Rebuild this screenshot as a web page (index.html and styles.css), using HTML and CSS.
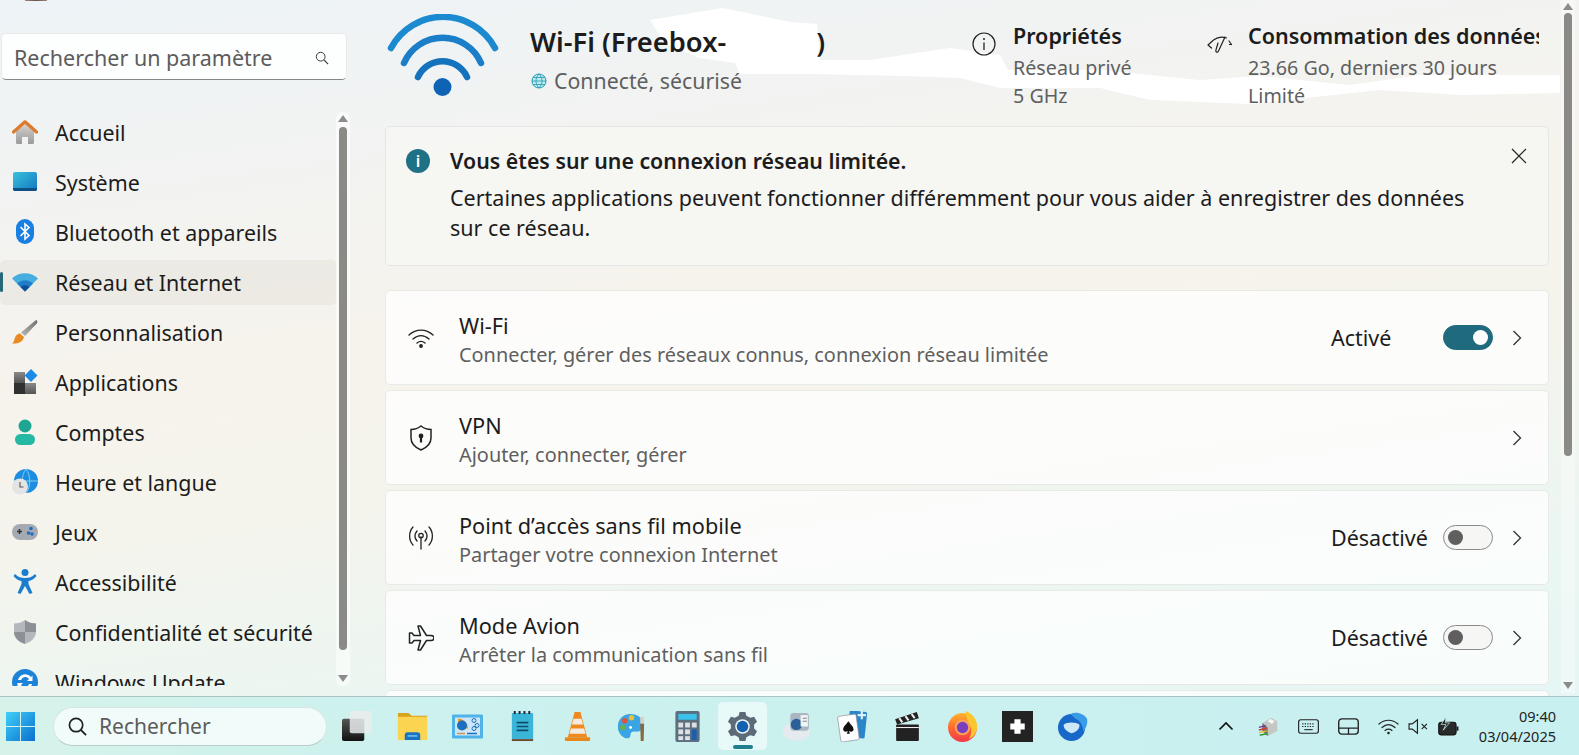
FILE: index.html
```html
<!DOCTYPE html>
<html lang="fr">
<head>
<meta charset="utf-8">
<title>Paramètres</title>
<link rel="stylesheet" href="styles.css">
</head>
<body>
<div class="app">
  <aside class="sidebar">
    <div class="avatar-sliver"></div>
    <div class="search-box">
      <span class="search-text">Rechercher un paramètre</span>
      <svg class="search-glass" viewBox="0 0 16 16"><circle cx="6.500" cy="6.500" r="5" fill="none" stroke="#333" stroke-width="1.100"/><path d="M10.200 10.200 15 15" stroke="#333" stroke-width="1.300"/></svg>
    </div>
    <nav class="nav">
      <a class="nav-item"><svg class="nav-icon" viewBox="0 0 26 24"><defs><linearGradient id="gh" x1="0" y1="0" x2="0" y2="1"><stop offset="0" stop-color="#d8d4d0"/><stop offset="1" stop-color="#9a9a9c"/></linearGradient></defs><path d="M4 11 13 3l9 8v11.500a1.500 1.500 0 0 1-1.500 1.500H16v-7h-6v7H5.500A1.500 1.500 0 0 1 4 22.500z" fill="url(#gh)"/><path d="M1.500 12 13 1.800 24.500 12" fill="none" stroke="#dd7a2c" stroke-width="3.200" stroke-linecap="round" stroke-linejoin="round"/></svg><span>Accueil</span></a>
      <a class="nav-item"><svg class="nav-icon" viewBox="0 0 26 24"><defs><linearGradient id="gs" x1="0" y1="0" x2="1" y2="1"><stop offset="0" stop-color="#39c0dc"/><stop offset="1" stop-color="#1477bf"/></linearGradient></defs><rect x="1" y="2" width="24" height="19" rx="2" fill="url(#gs)"/><path d="M1 18h24v1a2 2 0 0 1-2 2H3a2 2 0 0 1-2-2z" fill="#0d4f86"/></svg><span>Système</span></a>
      <a class="nav-item"><svg class="nav-icon" viewBox="0 0 26 26"><rect x="4" y="0" width="18" height="25" rx="9" fill="#1a7fe3"/><path d="M8.500 8 17 16.500 13 20V5l4 3.500L8.500 17" fill="none" stroke="#fff" stroke-width="1.600"/></svg><span>Bluetooth et appareils</span></a>
      <a class="nav-item active"><svg class="nav-icon" viewBox="0 0 26 20"><path d="M0 6.500C7-.5 19-.5 26 6.500L13 19.500z" fill="#43b3e8"/><path d="M5 11.500c5-4.500 11-4.500 16 0l-8 8z" fill="#1b80d2"/><path d="M8.500 15c3-2.500 6-2.500 9 0L13 19.500z" fill="#0b4f9e"/></svg><span>Réseau et Internet</span></a>
      <a class="nav-item"><svg class="nav-icon" viewBox="0 0 26 24"><defs><linearGradient id="gb" x1="1" y1="0" x2="0" y2="1"><stop offset="0" stop-color="#6f6f6f"/><stop offset="1" stop-color="#b8b8b8"/></linearGradient></defs><path d="M24 0c1.500.5 1.800 2 1 3.200L13 16l-4-3.500z" fill="url(#gb)"/><path d="M8 13.500 12 17c-1 5-6 7-12 6.500 2.500-1.500 2-4.500 3.500-7C4.800 14.300 6.500 13.300 8 13.500z" fill="#ea8a25"/></svg><span>Personnalisation</span></a>
      <a class="nav-item"><svg class="nav-icon" viewBox="0 0 26 26"><defs><linearGradient id="ga" x1="0" y1="0" x2="0" y2="1"><stop offset="0" stop-color="#8a8a8a"/><stop offset="1" stop-color="#555"/></linearGradient></defs><rect x="2" y="3" width="11" height="11" fill="url(#ga)"/><rect x="2" y="14" width="11" height="11" fill="#303030"/><rect x="13" y="14" width="11" height="11" fill="url(#ga)"/><path d="m19 0 6.500 6.500L19 13l-6.500-6.500z" fill="#1c8be6"/></svg><span>Applications</span></a>
      <a class="nav-item"><svg class="nav-icon" viewBox="0 0 26 26"><circle cx="13" cy="7" r="6.500" fill="#1fa692"/><rect x="3" y="15" width="20" height="11" rx="5.500" fill="#25b8a2"/></svg><span>Comptes</span></a>
      <a class="nav-item"><svg class="nav-icon" viewBox="0 0 26 26"><circle cx="14" cy="12" r="12" fill="#1c8de0"/><path d="M2 12h24M14 0c-5 6-5 18 0 24M14 0c5 6 5 18 0 24" stroke="#7fd0f0" stroke-width="1" fill="none"/><circle cx="8" cy="17.500" r="8" fill="#e4e4e4"/><path d="M8 13v5h3.500" stroke="#555" stroke-width="1.100" fill="none"/></svg><span>Heure et langue</span></a>
      <a class="nav-item"><svg class="nav-icon" viewBox="0 0 26 18"><rect x="0" y="1" width="26" height="16" rx="8" fill="#a6abb3"/><path d="M5 8.500h5M7.500 6v5" stroke="#333" stroke-width="1.500"/><circle cx="19" cy="5.500" r="1.800" fill="#1b6fc2"/><circle cx="16.500" cy="10" r="1.800" fill="#1b6fc2"/><circle cx="20" cy="11" r="1.800" fill="#1b6fc2"/></svg><span>Jeux</span></a>
      <a class="nav-item"><svg class="nav-icon" viewBox="0 0 26 26"><circle cx="13" cy="3.500" r="3.500" fill="#1b7dcf"/><path d="M3 5c3 3 6 4 10 4s7-1 10-4l1.500 2c-2.500 3-5 4.500-8 5v3l4 9-3 1-4.500-8-4.500 8-3-1 4-9v-3c-3-.5-5.500-2-8-5z" fill="#1b7dcf"/></svg><span>Accessibilité</span></a>
      <a class="nav-item"><svg class="nav-icon" viewBox="0 0 26 24"><path d="M13 0c3 2.500 7 3.500 11 3.500V12c0 5-4.500 10-11 12C6.500 22 2 17 2 12V3.500C6 3.500 10 2.500 13 0z" fill="#b4b8bc"/><path d="M13 0c3 2.500 7 3.500 11 3.500V12H13zM13 12H2c0 5 4.500 10 11 12z" fill="#8b9197"/></svg><span>Confidentialité et sécurité</span></a>
      <a class="nav-item"><svg class="nav-icon" viewBox="0 0 26 26"><circle cx="13" cy="13" r="13" fill="#1c83d8"/><path d="M6 11a7.500 7.500 0 0 1 13-3l1.500-1.500V12H15l2-2a4.500 4.500 0 0 0-8 1zM20 15a7.500 7.500 0 0 1-13 3l-1.500 1.500V14H11l-2 2a4.500 4.500 0 0 0 8-1z" fill="#fff"/></svg><span>Windows Update</span></a>
    </nav>
    <div class="scroll side-scroll"><i class="arrow up"></i><b class="thumb"></b><i class="arrow down"></i></div>
  </aside>

  <main class="main">
    <svg class="scribble" viewBox="0 0 1199 110"><path d="M270 20 343 8l67 14 27 2 3 36h50l80-12 50 7 8 15h92l100 10 60-4 90 9 70-10h140v18l-100 2-80-5-130 14-100-4-50-12H620l-40-10-55-2-90-2h-75l-5-11-35-5-35-14z" fill="#fff"/></svg>

    <header class="hero">
      <svg class="hero-icon" viewBox="0 0 116 84"><path d="M6 34A59 59 0 0 1 110 34" fill="none" stroke="#1c8ad0" stroke-width="6.500" stroke-linecap="round"/><path d="M19 49A42 42 0 0 1 96 49" fill="none" stroke="#1a7fc8" stroke-width="6.500" stroke-linecap="round"/><path d="M33 63A27 27 0 0 1 82 63" fill="none" stroke="#1573bd" stroke-width="6.500" stroke-linecap="round"/><circle cx="57.500" cy="73" r="9" fill="#0f63b5"/></svg>
      <div class="hero-info">
        <div class="hero-title">Wi-Fi (Freebox-<span class="redacted"></span>)</div>
        <div class="hero-status"><svg class="globe" viewBox="0 0 16 16"><circle cx="8" cy="8" r="7" fill="#bfe9f0" stroke="#1f9ab0" stroke-width="1"/><path d="M1 8h14M8 1c-4 4-4 10 0 14M8 1c4 4 4 10 0 14M2 4.500h12M2 11.500h12" fill="none" stroke="#1f9ab0" stroke-width=".8"/></svg>Connecté, sécurisé</div>
      </div>
      <div class="prop prop-a">
        <svg class="prop-icon" viewBox="0 0 24 24"><circle cx="12" cy="12" r="11" fill="none" stroke="#222" stroke-width="1.200"/><path d="M12 10.500V18" stroke="#222" stroke-width="1.300"/><circle cx="12" cy="7" r="1" fill="#222"/></svg>
        <div>
          <div class="prop-title">Propriétés</div>
          <div class="prop-line">Réseau privé</div>
          <div class="prop-line">5 GHz</div>
        </div>
      </div>
      <div class="prop prop-b">
        <svg class="prop-icon data" viewBox="0 0 26 20"><path d="M1 11 6 6.500M1 11l3.500 3M6.500 6c4-3 9-3.500 13-2M22 7l2.500 3.500M22.500 10.500l2-.2M18 3 11.500 17c-1 2-3.200 1.200-2.600-.8L11 9" fill="none" stroke="#222" stroke-width="1.200" stroke-linecap="round"/></svg>
        <div class="prop-body">
          <div class="prop-title">Consommation des données</div>
          <div class="prop-line">23.66 Go, derniers 30 jours</div>
          <div class="prop-line">Limité</div>
        </div>
      </div>
    </header>

    <section class="banner">
      <span class="banner-icon">i</span>
      <div class="banner-text">
        <div class="banner-title">Vous êtes sur une connexion réseau limitée.</div>
        <div class="banner-body">Certaines applications peuvent fonctionner différemment pour vous aider à enregistrer des données sur ce réseau.</div>
      </div>
      <svg class="banner-close" viewBox="0 0 16 16"><path d="M1 1l14 14M15 1 1 15" stroke="#222" stroke-width="1.200"/></svg>
    </section>

    <section class="cards">
      <div class="card">
        <svg class="card-icon" viewBox="0 0 26 20"><path d="M1 7c7-6.500 17-6.500 24 0M5 11c5-4.500 11-4.500 16 0M9 15c2.500-2 5.500-2 8 0" fill="none" stroke="#222" stroke-width="1.400" stroke-linecap="round"/><circle cx="13" cy="18" r="1.900" fill="#222"/></svg>
        <div class="card-text"><div class="card-title">Wi-Fi</div><div class="card-sub">Connecter, gérer des réseaux connus, connexion réseau limitée</div></div>
        <span class="card-state">Activé</span><span class="toggle on"><i></i></span>
        <svg class="chevron" viewBox="0 0 10 16"><path d="m1.500 1 7 7-7 7" fill="none" stroke="#333" stroke-width="1.300"/></svg>
      </div>
      <div class="card">
        <svg class="card-icon" viewBox="0 0 26 26"><path d="M13 1c3 2.500 6.500 3.500 10 3.500V13c0 5.500-4 9.500-10 12C7 22.500 3 18.500 3 13V4.500C6.500 4.500 10 3.500 13 1z" fill="none" stroke="#222" stroke-width="1.500"/><circle cx="13" cy="11" r="2.400" fill="#222"/><rect x="11.900" y="11" width="2.200" height="6.500" fill="#222"/></svg>
        <div class="card-text"><div class="card-title">VPN</div><div class="card-sub">Ajouter, connecter, gérer</div></div>
        <svg class="chevron" viewBox="0 0 10 16"><path d="m1.500 1 7 7-7 7" fill="none" stroke="#333" stroke-width="1.300"/></svg>
      </div>
      <div class="card">
        <svg class="card-icon" viewBox="0 0 26 24"><path d="M5 1C.5 6 .5 14 5 19M21 1c4.500 5 4.500 13 0 18M9 5c-2.500 3-2.500 7 0 10M17 5c2.500 3 2.500 7 0 10M13 11v12" fill="none" stroke="#222" stroke-width="1.300" stroke-linecap="round"/><circle cx="13" cy="9.500" r="2.200" fill="none" stroke="#222" stroke-width="1.300"/></svg>
        <div class="card-text"><div class="card-title">Point d’accès sans fil mobile</div><div class="card-sub">Partager votre connexion Internet</div></div>
        <span class="card-state">Désactivé</span><span class="toggle"><i></i></span>
        <svg class="chevron" viewBox="0 0 10 16"><path d="m1.500 1 7 7-7 7" fill="none" stroke="#333" stroke-width="1.300"/></svg>
      </div>
      <div class="card">
        <svg class="card-icon" viewBox="0 0 26 26"><path d="M10 1h2.500l6 9.500H23c2 0 3 1.200 3 2.500s-1 2.500-3 2.500h-4.500l-6 9.500H10l2.500-9.500H6l-2 2.500H1.500V8H4l2 2.500h6.500z" fill="none" stroke="#222" stroke-width="1.500" stroke-linejoin="round"/></svg>
        <div class="card-text"><div class="card-title">Mode Avion</div><div class="card-sub">Arrêter la communication sans fil</div></div>
        <span class="card-state">Désactivé</span><span class="toggle"><i></i></span>
        <svg class="chevron" viewBox="0 0 10 16"><path d="m1.500 1 7 7-7 7" fill="none" stroke="#333" stroke-width="1.300"/></svg>
      </div>
      <div class="card"></div>
    </section>
    <div class="scroll main-scroll"><i class="arrow up"></i><b class="thumb"></b><i class="arrow down"></i></div>
  </main>
</div>

<footer class="taskbar">
  <svg class="start" viewBox="0 0 29 29"><defs><linearGradient id="gw" x1="0" y1="0" x2="1" y2="1"><stop offset="0" stop-color="#3fd0f8"/><stop offset="1" stop-color="#0a6fd0"/></linearGradient></defs><path d="M0 0h14v14H0zM15 0h14v14H15zM0 15h14v14H0zM15 15h14v14H15z" fill="url(#gw)"/></svg>
  <div class="pill">
    <svg class="pill-glass" viewBox="0 0 20 20"><circle cx="8.500" cy="8.500" r="7" fill="none" stroke="#222" stroke-width="1.800"/><path d="m13.500 13.500 5.500 5.500" stroke="#222" stroke-width="2"/></svg>
    <span>Rechercher</span>
  </div>
  <div class="apps">
    <span class="app-slot"><svg viewBox="0 0 32 32"><defs><linearGradient id="gt" x1="0" y1="0" x2="0" y2="1"><stop offset="0" stop-color="#555"/><stop offset="1" stop-color="#111"/></linearGradient></defs><rect x="0" y="8" width="23" height="23" rx="2" fill="url(#gt)"/><rect x="8" y="0" width="23" height="23" rx="2" fill="#e9ecec" opacity=".85"/></svg></span>
    <span class="app-slot"><svg viewBox="0 0 32 30"><path d="M1 1h11l3 3h16v25H1z" fill="#d9a21e"/><rect x="1" y="5" width="30" height="24" fill="#fbd552"/><path d="M8 29v-5a3 3 0 0 1 3-3h10a3 3 0 0 1 3 3v5z" fill="#1873c2"/><rect x="11" y="24" width="10" height="1.500" fill="#7cc6f0"/></svg></span>
    <span class="app-slot"><svg viewBox="0 0 31 26"><rect x="0" y="1" width="31" height="24" rx="1" fill="#4fb3ea"/><rect x="3" y="4" width="25" height="18" fill="#cde7f7"/><path d="M6 5v10h10A10 10 0 0 0 6 5z" fill="#e59a1f"/><circle cx="10" cy="12" r="5" fill="#1b6fc0"/><circle cx="22" cy="7" r="2" fill="none" stroke="#1b6fc0"/><circle cx="25" cy="12" r="2" fill="none" stroke="#1b6fc0"/><circle cx="22" cy="15" r="2" fill="none" stroke="#1b6fc0"/><path d="M5 20h8" stroke="#c99a4e" stroke-width="1.500"/><path d="M15 20h10" stroke="#1b6fc0" stroke-width="1.500"/></svg></span>
    <span class="app-slot"><svg viewBox="0 0 24 32"><rect x="1" y="2" width="22" height="27" rx="1" fill="#3ab5d8"/><rect x="1" y="29" width="22" height="2" fill="#6d4a2e"/><path d="M6 12h12M6 16h12M6 20h12" stroke="#0f4f6c" stroke-width="1.600"/><path d="M4 0v3M9 0v3M14 0v3M19 0v3" stroke="#223" stroke-width="2"/></svg></span>
    <span class="app-slot"><svg viewBox="0 0 26 32"><path d="M10 1h6l7 26H3z" fill="#f08a1e"/><path d="M8.800 8h8.400l1.500 6H7.300zM6.200 18h13.600l1.500 5.500H4.700z" fill="#f1ebe4"/><rect x="0" y="27" width="26" height="4" rx="1" fill="#e8871c"/></svg></span>
    <span class="app-slot"><svg viewBox="0 0 32 32"><path d="M14 3C6 3 0 9 1 18c1 7 7 11 11 10 3-1 1-4 3-6 2-1.500 5 0 8-1 3-2 6-5 4-10C25 6 20 3 14 3z" fill="#39a5e4"/><circle cx="8" cy="10" r="2.800" fill="#e0533a"/><circle cx="15" cy="7" r="2.800" fill="#e8c23a"/><circle cx="6" cy="17" r="2.800" fill="#6cae47"/><circle cx="14" cy="17" r="1.500" fill="#fff"/><path d="M24 13h4l-.5 18h-3z" fill="#8a6a3d"/><rect x="24" y="6" width="4" height="7" fill="#d8d2c4"/></svg></span>
    <span class="app-slot"><svg viewBox="0 0 25 32"><rect x="0" y="0" width="25" height="32" rx="2" fill="#5d6f7e"/><rect x="3" y="3" width="19" height="6" fill="#3ac2ea"/><g fill="#dde1e5"><rect x="3" y="12" width="5" height="5"/><rect x="10" y="12" width="5" height="5"/><rect x="3" y="19" width="5" height="5"/><rect x="10" y="19" width="5" height="5"/><rect x="3" y="26" width="5" height="4"/><rect x="10" y="26" width="5" height="4"/></g><rect x="17" y="19" width="5" height="11" fill="#1c5fae"/><rect x="17" y="12" width="5" height="5" fill="#dde1e5"/></svg></span>
    <span class="app-slot current"><svg viewBox="0 0 32 32"><path d="M13 1h6l1 4 4 2 4-1 3 5-3 3v4l3 3-3 5-4-1-4 2-1 4h-6l-1-4-4-2-4 1-3-5 3-3v-4L1 11l3-5 4 1 4-2z" fill="#5c6b77"/><circle cx="16" cy="16" r="7.500" fill="#eef6f6"/><circle cx="16" cy="16" r="6" fill="#1660b0"/></svg><i class="run-mark"></i></span>
    <span class="app-slot"><svg viewBox="0 0 30 30"><ellipse cx="14" cy="20" rx="13" ry="9" fill="#e4eaee"/><rect x="8" y="2" width="18" height="17" rx="3" fill="#aab6c0"/><circle cx="14" cy="13" r="5.500" fill="#2a5f9a"/><path d="M18 4h7v11h-7z" fill="#f2f5f6"/><path d="M20 7h4M20 10h4" stroke="#7a8790"/></svg></span>
    <span class="app-slot"><svg viewBox="0 0 30 30"><rect x="11" y="0" width="17" height="26" rx="1.500" fill="#2a86c8" transform="rotate(6 19 13)"/><rect x="2" y="4" width="18" height="25" rx="1.500" fill="#fff" stroke="#889" stroke-width=".6" transform="rotate(-8 11 16)"/><path d="M11 10c2 3 5 5 5 8 0 2-3 3-4.500 1l1 3h-3l1-3C9 21 6 20 6 18c0-3 3-5 5-8z" fill="#111"/><path d="M24 0v8M20 4h8" stroke="#dff2fb" stroke-width="2"/></svg></span>
    <span class="app-slot"><svg viewBox="0 0 26 30"><rect x="2" y="13" width="22" height="16" rx="1" fill="#222"/><path d="M1 8 22 1l2 6L3 13z" fill="#222"/><path d="M5 7l3 4M11 5l3 4M17 3l3 4" stroke="#eee" stroke-width="2"/><path d="M2 16h22" stroke="#eee" stroke-width="1"/></svg></span>
    <span class="app-slot"><svg viewBox="0 0 30 30"><defs><linearGradient id="gf" x1="0" y1="0" x2="0" y2="1"><stop offset="0" stop-color="#ffb52e"/><stop offset=".5" stop-color="#ff6a30"/><stop offset="1" stop-color="#f0384a"/></linearGradient></defs><circle cx="15" cy="16" r="14" fill="url(#gf)"/><path d="M18 0c8 3 12 10 11 17-1 5-4 9-8 10 4-5 3-12-1-16z" fill="#fcc62e"/><circle cx="15" cy="16" r="7.500" fill="#f9a35a"/><circle cx="15" cy="16" r="5.500" fill="#7a3fc0"/></svg></span>
    <span class="app-slot"><svg viewBox="0 0 30 30"><rect width="30" height="30" fill="#232323"/><path d="M12 8h6v4h4v6h-4v4h-6v-4H8v-6h4z" fill="#fff"/></svg></span>
    <span class="app-slot"><svg viewBox="0 0 32 32"><circle cx="15" cy="17" r="14" fill="#1868c9"/><path d="M14 3c6-3 14 0 17 5 1 5-1 10-4 13 0-6-3-11-8-13z" fill="#3a9be8"/><path d="M7 14c3-3 13-3 16 0 1 4-3 8-8 9-4-1-9-5-8-9z" fill="#cfe8f8"/></svg></span>
  </div>
  <div class="tray">
    <svg class="tray-icon chev" viewBox="0 0 16 10"><path d="M1.500 8.500 8 2l6.500 6.500" fill="none" stroke="#111" stroke-width="1.700"/></svg>
    <svg class="tray-icon" viewBox="0 0 22 24"><path d="M4 8l10-6 7 4v11l-11 6-6-6z" fill="#c3c8c4"/><path d="M4 8l6 5v10l-6-6z" fill="#6f7670"/><path d="M13 3l5 3-3 3-5-3z" fill="#f4f6f4"/><path d="M0 13l8-2" stroke="#7c2f9c" stroke-width="1.700"/><path d="M0 16l9-2" stroke="#d8382e" stroke-width="1.700"/><path d="M0 19l9-2" stroke="#e6c028" stroke-width="1.700"/><path d="M1 22l9-2" stroke="#2f9c3c" stroke-width="1.700"/></svg>
    <svg class="tray-icon" viewBox="0 0 20 14"><rect x=".6" y=".6" width="18.800" height="12.800" rx="2" fill="none" stroke="#222" stroke-width="1.100"/><path d="M4 4.500h12M4 7h12" stroke="#222" stroke-width="1" stroke-dasharray="1.200 1.200"/><path d="M6 10h8" stroke="#222"/></svg>
    <svg class="tray-icon" viewBox="0 0 20 16"><rect x=".7" y=".7" width="18.600" height="14.600" rx="3" fill="none" stroke="#222" stroke-width="1.300"/><path d="M1 9.500h18M10 9.500v6" stroke="#222" stroke-width="1.200"/></svg>
    <svg class="tray-icon narrow" viewBox="0 0 21 16"><path d="M1 5.500c5.500-5 13.500-5 19 0M4 9c4-3.500 9-3.500 13 0M7 12c2-1.500 5-1.500 7 0" fill="none" stroke="#222" stroke-width="1.200" stroke-linecap="round"/><circle cx="10.500" cy="14.500" r="1.300" fill="#222"/></svg>
    <svg class="tray-icon narrow" viewBox="0 0 20 16"><path d="M1 5.500h3L9 1.500v13l-5-4H1z" fill="none" stroke="#222" stroke-width="1.100"/><path d="m13 5.500 5 5M18 5.500l-5 5" stroke="#222" stroke-width="1.100"/></svg>
    <svg class="tray-icon narrow" viewBox="0 0 20 18"><rect x=".7" y="5" width="16.500" height="12" rx="2.500" fill="#2a2a2a" stroke="#111"/><rect x="17.500" y="9" width="2" height="4" fill="#222"/><path d="M7.500 0 3 7h4.500L5 12.500 11 5.500H7z" fill="#222" stroke="#c8f0f0" stroke-width=".7"/></svg>
    <div class="clock"><div>09:40</div><div>03/04/2025</div></div>
  </div>
</footer>
</body>
</html>
```
FILE: styles.css
```css
* { box-sizing: border-box; }
html, body { margin: 0; height: 100%; }
body {
  width: 1579px; height: 755px; overflow: hidden;
  display: flex; flex-direction: column;
  font-family: "Noto Sans", "Open Sans", sans-serif;
  color: #1c1c1c;
  background: linear-gradient(172deg, #edf3f7 0%, #f0f3f4 12%, #f6f3ed 38%, #f5f4ec 55%, #eaf6f2 80%, #e6f6f4 92%);
}
.app { flex: 1; display: flex; min-height: 0; }

/* Sidebar */
.sidebar { width: 385px; flex: none; position: relative; padding-left: 1px; }
.avatar-sliver { height: 1px; width: 22px; margin-left: 24px; background: #6d5148; border-radius: 0 0 50% 50%; }
.search-box {
  width: 346px; height: 47px; margin-top: 32px;
  display: flex; align-items: center; justify-content: space-between;
  padding: 2px 17px 0 12px;
  background: #fdfefe; border: 1px solid #e9ebea; border-bottom: 1.500px solid #858585; border-radius: 5px;
}
.search-text { font-size: 21.500px; color: #5c5c5c; }
.search-glass { width: 14px; height: 14px; }
.nav { margin-top: 27px; height: 579px; width: 337px; overflow: hidden; margin-left: -1px; }
.nav-item { display: flex; align-items: center; height: 50px; position: relative; font-size: 21.400px; padding-left: 12px; }
.nav-icon { width: 26px; height: 26px; flex: none; margin-right: 17px; }
.nav-item.active::after {
  content: ""; position: absolute; left: 0; right: 0; top: 2.500px; bottom: 2.500px;
  background: rgba(120, 100, 70, .06); border-radius: 5px;
}
.nav-item.active::before {
  content: ""; position: absolute; left: 0; top: 15px; width: 3px; height: 20px;
  background: #1f6a7c; border-radius: 2px;
}
.nav-item span { position: relative; z-index: 1; }

/* Scrollbars */
.scroll { position: absolute; width: 14px; display: flex; flex-direction: column; align-items: center; }
.side-scroll { left: 336px; top: 112px; height: 574px; background: rgba(255,255,255,.55); border-radius: 7px; }
.main-scroll { right: 4px; top: 0; height: 693px; background: rgba(255,255,255,.35); }
.thumb { width: 8px; flex: none; background: #8a8a86; border-radius: 4px; }
.side-scroll .thumb { height: 523px; margin-top: 5px; }
.main-scroll .thumb { height: 443px; margin-top: 3px; }
.arrow { display: block; width: 0; height: 0; border-left: 5px solid transparent; border-right: 5px solid transparent; flex: none; }
.arrow.up { border-bottom: 7px solid #8c8c8c; margin-top: 3px; }
.arrow.down { border-top: 7px solid #8c8c8c; margin-top: auto; margin-bottom: 4px; }

/* Main */
.main { flex: 1; position: relative; padding-right: 30px; overflow: hidden; min-width: 0; }
.scribble { position: absolute; left: -5px; top: 0; width: 1199px; height: 110px; }
.hero { position: relative; display: flex; height: 126px; }
.hero-icon { width: 116px; height: 84px; margin-top: 14px; flex: none; }
.hero-info { width: 442px; margin-left: 29px; flex: none; }
.hero-title { font-size: 27.300px; font-weight: 600; line-height: 36px; margin-top: 24px; white-space: nowrap; }
.redacted { display: inline-block; width: 90px; }
.hero-status { display: flex; align-items: center; font-size: 21.300px; line-height: 30px; margin-top: 6px; color: #5f5f5f; }
.globe { width: 16px; height: 16px; margin: 0 7px 0 1px; }
.prop { display: flex; margin-top: 21px; }
.prop-a { width: 235px; }
.prop-b { flex: none; width: 332px; }
.prop-icon { width: 24px; height: 24px; margin: 11px 17px 0 0; flex: none; }
.prop-icon.data { width: 26px; height: 20px; margin-top: 13px; margin-right: 15px; }
.prop-body { flex: none; width: 291px; overflow: hidden; }
.prop-title { font-size: 21.500px; font-weight: 600; line-height: 30px; white-space: nowrap; }
.prop-line { font-size: 19.700px; line-height: 28px; margin-top: 3px; color: #5f5f5f; white-space: nowrap; }
.prop-line + .prop-line { margin-top: 0; }

.banner {
  height: 140px; display: flex; padding: 21px 21px 0 20px;
  background: rgba(246,246,244,.8); border: 1px solid #e6e7e5; border-radius: 5px;
}
.banner-icon {
  width: 24px; height: 24px; flex: none; border-radius: 50%; margin-top: 1px;
  background: #1f7186; color: #fff; font-weight: 600; font-size: 16px; line-height: 24px; text-align: center;
}
.banner-text { flex: 1; margin-left: 20px; margin-right: 40px; margin-top: -1px; }
.banner-title { font-size: 21.300px; font-weight: 600; line-height: 28px; }
.banner-body { font-size: 21.500px; line-height: 30px; margin-top: 8px; }
.banner-close { width: 16px; height: 16px; flex: none; }

.cards { display: flex; flex-direction: column; gap: 5px; margin-top: 24px; }
.card {
  height: 95px; flex: none; display: flex; align-items: center; padding: 0 26px 0 22px;
  background: rgba(255,255,255,.72); border: 1px solid #e8eae8; border-radius: 5px;
}
.card-icon { width: 26px; height: 26px; flex: none; margin-right: 25px; }
.card-text { flex: 1; min-width: 0; padding-top: 5px; }
.card-title { font-size: 21.700px; line-height: 30px; }
.card-sub { font-size: 19.900px; line-height: 28px; color: #5f5f5f; }
.card-state { width: 112px; font-size: 21.500px; }
.toggle {
  width: 50px; height: 25px; margin-right: 19px; flex: none; display: flex; align-items: center; padding: 0 4px;
  background: #f6f6f5; border: 1.500px solid #8a8a8a; border-radius: 13px;
}
.toggle i { width: 15px; height: 15px; border-radius: 50%; background: #5f5f5f; }
.toggle.on { background: #1f6a7c; border-color: #1f6a7c; justify-content: flex-end; }
.toggle.on i { background: #fff; }
.chevron { width: 10px; height: 16px; flex: none; }

/* Taskbar */
.taskbar {
  height: 59px; flex: none; display: flex; align-items: center; padding: 0 23px 0 6px;
  background: linear-gradient(90deg, #d6f3ea 0%, #ccf1ee 25%, #c8f0f0 100%);
  border-top: 1px solid #a9c4c2;
}
.start { width: 29px; height: 29px; flex: none; }
.pill {
  width: 274px; height: 39px; margin-left: 18px; flex: none; display: flex; align-items: center; padding: 0 14px;
  background: #f1fbf9; border: 1px solid #d6e6e3; border-bottom-color: #b9cdca; border-radius: 20px;
  font-size: 21px; color: #5c5c5c;
}
.pill-glass { width: 19px; height: 19px; margin-right: 12px; }
.apps { display: flex; margin-left: 3px; }
.app-slot { width: 55px; height: 48px; display: flex; align-items: center; justify-content: center; position: relative; }
.app-slot svg { width: 31px; height: 31px; position: relative; }
.app-slot.current::before { content: ""; position: absolute; inset: 0 3px; background: rgba(255,255,255,.55); border-radius: 5px; }
.run-mark { position: absolute; bottom: 1px; left: 18px; width: 20px; height: 4px; background: #1f7f8f; border-radius: 2px; }
.tray { margin-left: auto; display: flex; align-items: center; }
.tray-icon { width: 21px; height: 21px; margin-right: 19px; flex: none; }
.tray-icon.chev { width: 16px; height: 10px; margin-right: 24px; }
.tray-icon.narrow { margin-right: 9px; }
.clock { font-size: 14.500px; line-height: 20px; text-align: right; color: #222; margin-left: 11px; }
```
